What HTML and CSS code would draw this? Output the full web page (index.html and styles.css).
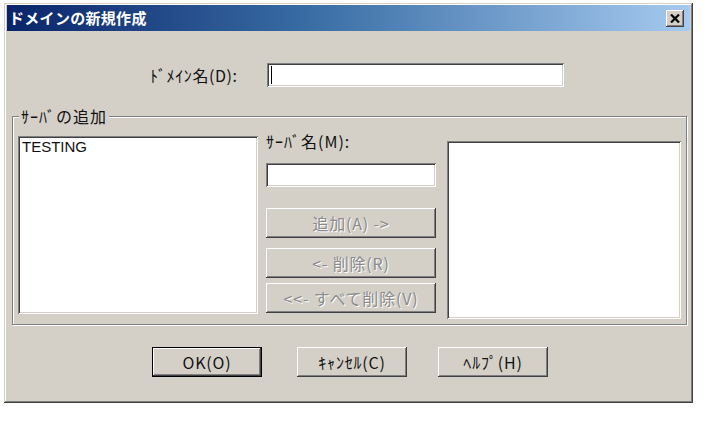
FILE: index.html
```html
<!DOCTYPE html>
<html lang="ja">
<head>
    <meta charset="UTF-8">
    <title>ドメインの新規作成</title>
    <link rel="stylesheet" href="styles.css">
</head>
<body>
    <div class="dialog">
        <div class="titlebar">
            <span class="title">ドメインの新規作成</span>
            <button class="close" type="button">
                <svg width="10" height="9" viewBox="0 0 10 9">
                    <path d="M1 0.5 L9 8.5 M9 0.5 L1 8.5" stroke="#000" stroke-width="2.2" fill="none"/>
                </svg>
            </button>
        </div>

        <div class="domain-row">
            <label class="domain-label">ﾄﾞﾒｲﾝ名(D):</label>
            <div class="textbox domain-input"><span class="caret"></span></div>
        </div>

        <div class="group">
            <div class="legend">ｻｰﾊﾞの追加</div>
            <div class="group-body">
                <div class="listbox list-left">TESTING</div>
                <div class="middle">
                    <label class="server-label">ｻｰﾊﾞ名(M):</label>
                    <div class="textbox server-input"></div>
                    <button class="btn disabled btn-add" type="button">追加(A) -&gt;</button>
                    <button class="btn disabled btn-remove" type="button">&lt;- 削除(R)</button>
                    <button class="btn disabled btn-remove-all" type="button">&lt;&lt;- すべて削除(V)</button>
                </div>
                <div class="listbox list-right"></div>
            </div>
        </div>

        <div class="actions">
            <button class="btn default" type="button">OK(O)</button>
            <button class="btn btn-cancel" type="button">ｷｬﾝｾﾙ(C)</button>
            <button class="btn btn-help" type="button">ﾍﾙﾌﾟ(H)</button>
        </div>
    </div>
</body>
</html>
```

FILE: styles.css
```css
body {
    margin: 0;
    padding: 0;
    background-color: #fff;
    font-family: "Noto Sans CJK JP", "Liberation Sans", sans-serif;
    font-size: 16px;
    letter-spacing: 0.6px;
    color: #111;
}

/* window frame, classic raised border */
.dialog {
    width: 689px;
    height: 400px;
    margin: 3px 0 0 4px;
    padding: 2px 3px 3px 3px;
    box-sizing: border-box;
    background-color: #d4d0c8;
    box-shadow: inset -1px -1px 0 #404040, inset 1px 1px 0 #d4d0c8,
                inset -2px -2px 0 #808080, inset 2px 2px 0 #fff;
}

.titlebar {
    height: 26px;
    display: flex;
    align-items: center;
    justify-content: space-between;
    background: linear-gradient(to right, #0a246a 0%, #3a6ea5 45%, #a6caf0 100%);
}

.title {
    color: #fff;
    font-weight: bold;
    font-size: 15px;
    line-height: 18px;
    padding-left: 2px;
    letter-spacing: 0.3px;
}

.close {
    width: 18px;
    height: 17px;
    margin-right: 6px;
    padding: 0;
    border: none;
    display: flex;
    align-items: center;
    justify-content: center;
    background-color: #d4d0c8;
    box-shadow: inset -1px -1px 0 #404040, inset 1px 1px 0 #fff,
                inset -2px -2px 0 #808080;
}

.domain-row {
    display: flex;
    align-items: center;
    margin-top: 32px;
    padding-left: 143px;
}

.domain-label {
    width: 117px;
    line-height: 18px;
}

/* sunken edit and list controls */
.textbox, .listbox {
    background-color: #fff;
    box-sizing: border-box;
    box-shadow: inset 1px 1px 0 #808080, inset -1px -1px 0 #fff,
                inset 2px 2px 0 #404040, inset -2px -2px 0 #d4d0c8;
}

.domain-input {
    width: 297px;
    height: 24px;
    padding: 3px 0 0 4px;
}

.caret {
    display: block;
    width: 1px;
    height: 18px;
    background-color: #000;
}

/* etched group box */
.group {
    margin: 29px 0 0 5px;
    width: 675px;
    border: 1px solid #808080;
    box-sizing: border-box;
    box-shadow: inset 1px 1px 0 #fff, 1px 1px 0 #fff;
}

.legend {
    width: fit-content;
    margin: -10px 0 0 6px;
    padding: 0 2px;
    line-height: 18px;
    letter-spacing: 1px;
    background-color: #d4d0c8;
}

.group-body {
    display: flex;
    align-items: flex-start;
    margin-top: 11px;
    padding: 0 4px 5px 5px;
}

.list-left {
    width: 240px;
    height: 178px;
    padding: 2px 4px;
    line-height: 18px;
    font-family: "Liberation Sans", sans-serif;
    font-size: 15px;
    letter-spacing: 0;
}

.middle {
    display: flex;
    flex-direction: column;
    width: 170px;
    margin: -4px 0 0 8px;
}

.server-label {
    line-height: 18px;
    letter-spacing: 1px;
}

.server-input {
    height: 24px;
    margin-top: 13px;
}

.list-right {
    width: 234px;
    height: 178px;
    margin: 5px 0 0 11px;
}

/* push buttons */
.btn {
    height: 30px;
    padding: 0;
    border: none;
    font-family: inherit;
    font-size: 16px;
    letter-spacing: 0.8px;
    color: #111;
    background-color: #d4d0c8;
    box-shadow: inset -1px -1px 0 #404040, inset 1px 1px 0 #fff,
                inset -2px -2px 0 #808080, inset 2px 2px 0 #d4d0c8;
}

.btn.disabled {
    color: #8a8a8a;
    text-shadow: 1px 1px 0 #fff;
}

.btn-add {
    margin-top: 21px;
}

.btn-remove {
    margin-top: 10px;
}

.btn-remove-all {
    margin-top: 5px;
}

.actions {
    display: flex;
    margin-top: 22px;
    padding-left: 145px;
}

.actions .btn {
    width: 110px;
}

.btn.default {
    border: 1px solid #000;
    box-sizing: border-box;
}

.btn-cancel {
    margin-left: 35px;
}

.btn-help {
    margin-left: 31px;
}
```
